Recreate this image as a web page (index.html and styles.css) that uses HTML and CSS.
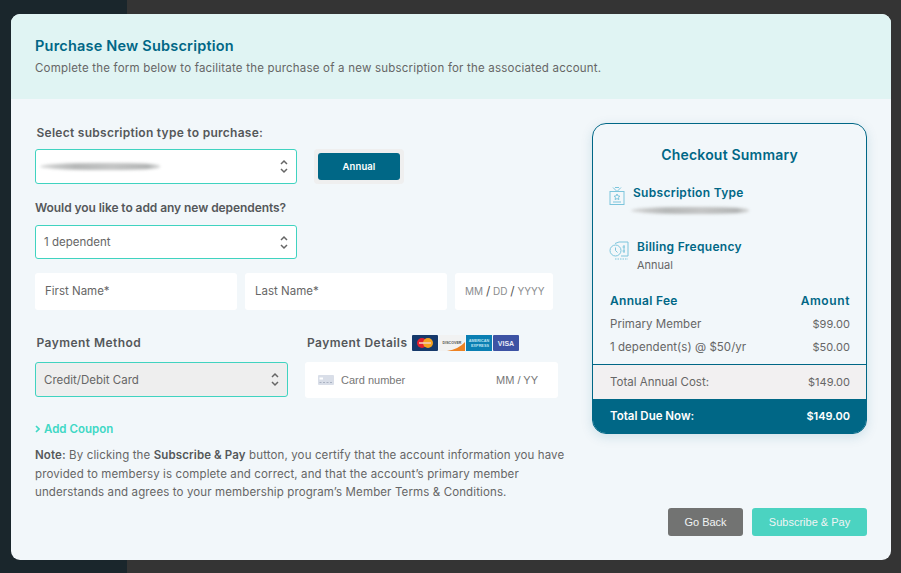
FILE: index.html
```html
<!DOCTYPE html>
<html lang="en">
<head>
  <meta charset="UTF-8">
  <meta name="viewport" content="width=device-width, initial-scale=1.0">
  <title>Purchase New Subscription</title>
  <link rel="stylesheet" href="styles.css">
</head>
<body>
  <div class="sidebar-strip"></div>
  <div class="modal">
    <div class="modal__header">
      <h1 class="modal__title">Purchase New Subscription</h1>
      <p class="modal__subtitle">Complete the form below to facilitate the purchase of a new subscription for the associated account.</p>
    </div>
    <div class="modal__body">
      <div class="form-col">
        <div class="field-label field-label--inset">Select subscription type to purchase:</div>
        <div class="type-row">
          <div class="select-box">
            <span class="smudge smudge--select"></span>
            <svg class="updown" width="10" height="15" viewBox="0 0 10 15"><path d="M2 5l3-3 3 3M2 10l3 3 3-3" fill="none" stroke="#666" stroke-width="1.5"/></svg>
          </div>
          <div class="frequency-tabs"><button class="frequency-tab">Annual</button></div>
        </div>
        <div class="field-label field-label--second">Would you like to add any new dependents?</div>
        <div class="select-box select-box--dep">
          <span>1 dependent</span>
          <svg class="updown" width="10" height="15" viewBox="0 0 10 15"><path d="M2 5l3-3 3 3M2 10l3 3 3-3" fill="none" stroke="#666" stroke-width="1.5"/></svg>
        </div>
        <div class="name-row">
          <div class="text-input text-input--name">First Name*</div>
          <div class="text-input text-input--name">Last Name*</div>
          <div class="text-input text-input--date">MM <b>/</b> DD <b>/</b> YYYY</div>
        </div>
        <div class="payment-row">
          <div class="payment-method">
            <div class="field-label field-label--inset field-label--pay">Payment Method</div>
            <div class="select-box select-box--grey">
              <span>Credit/Debit Card</span>
              <svg class="updown" width="10" height="15" viewBox="0 0 10 15"><path d="M2 5l3-3 3 3M2 10l3 3 3-3" fill="none" stroke="#666" stroke-width="1.5"/></svg>
            </div>
          </div>
          <div class="payment-details">
            <div class="details-head">
              <span class="field-label field-label--pay">Payment Details</span>
              <svg class="card-logo" width="26" height="16" viewBox="0 0 26 16"><rect width="26" height="16" rx="1" fill="#16396b"/><circle cx="10" cy="8" r="5" fill="#e3202e"/><circle cx="16" cy="8" r="5" fill="#f6a21e"/><rect x="7" y="7" width="12" height="2" fill="#f5c9b5" opacity=".8"/></svg>
              <svg class="card-logo" width="26" height="16" viewBox="0 0 26 16"><rect width="26" height="16" fill="#f1f2f2"/><path d="M26 7v9H8q12-2 18-9z" fill="#ee8323"/><text x="13" y="9" font-size="3.6" font-weight="700" text-anchor="middle" fill="#555" font-family="Liberation Sans">DISCOVER</text></svg>
              <svg class="card-logo" width="26" height="16" viewBox="0 0 26 16"><rect width="26" height="16" fill="#0a7fb3"/><text x="13" y="7" font-size="3.8" font-weight="700" text-anchor="middle" fill="#bfe3f2" font-family="Liberation Sans">AMERICAN</text><text x="14" y="11.5" font-size="3.8" font-weight="700" text-anchor="middle" fill="#bfe3f2" font-family="Liberation Sans">EXPRESS</text></svg>
              <svg class="card-logo" width="26" height="16" viewBox="0 0 26 16"><rect width="26" height="16" rx="1" fill="#3d53a4"/><text x="13" y="10.5" font-size="7" font-weight="700" text-anchor="middle" fill="#e8ebf6" font-family="Liberation Sans">VISA</text></svg>
            </div>
            <div class="card-input">
              <svg width="16" height="10" viewBox="0 0 16 10"><rect width="16" height="10" rx="1" fill="#d9dee8"/><rect x="1.5" y="2.5" width="3.5" height="2" fill="#fff"/><path d="M1.5 7.5h2M5 7.5h2M8.500 7.5h2M12 7.500h2" stroke="#aab2c2"/></svg>
              <span class="card-input__number">Card number</span>
              <span class="card-input__expiry">MM / YY</span>
            </div>
          </div>
        </div>
        <div class="coupon-link">
          <svg width="5" height="8" viewBox="0 0 5 8"><path d="M1 1l3 3-3 3" fill="none" stroke="#40d8c5" stroke-width="1.600"/></svg>
          <span>Add Coupon</span>
        </div>
        <p class="note"><b>Note:</b> By clicking the <b>Subscribe &amp; Pay</b> button, you certify that the account information you have provided to membersy is complete and correct, and that the account’s primary member understands and agrees to your membership program’s Member Terms &amp; Conditions.</p>
      </div>
      <div class="summary-col">
        <div class="summary-card">
          <div class="summary-card__title">Checkout Summary</div>
          <div class="summary-item">
            <svg class="summary-item__icon" width="16" height="18" viewBox="0 0 16 18" fill="none" stroke="#7cc5dc"><rect x="1" y="4.500" width="14" height="13"/><path d="M4 .5l4 4 4-4M6 .5h4"/><path d="M8 7l1 2 2 .2-1.500 1.400.4 2-1.900-1-1.900 1 .4-2L5 9.200l2-.2z"/><path d="M4 15h8"/></svg>
            <div class="summary-item__text">
              <div class="summary-item__label">Subscription Type</div>
              <span class="smudge smudge--summary"></span>
            </div>
          </div>
          <div class="summary-item summary-item--billing">
            <svg class="summary-item__icon" width="20" height="19" viewBox="0 0 20 19" fill="none" stroke="#7cc5dc"><circle cx="6.500" cy="9.500" r="5.500"/><path d="M6.500 6.500v3l2 2"/><path d="M6 2.500l4-1.500h9v14h-7"/><path d="M15 4v8M13.500 6h2.500M13.500 10h2.500"/><path d="M6 18h13" stroke-dasharray="1.500 1"/></svg>
            <div class="summary-item__text">
              <div class="summary-item__label">Billing Frequency</div>
              <div class="summary-item__value">Annual</div>
            </div>
          </div>
          <div class="fee-table">
            <div class="fee-row fee-row--head"><span>Annual Fee</span><span class="amount-head">Amount</span></div>
            <div class="fee-row"><span>Primary Member</span><span class="amount">$99.00</span></div>
            <div class="fee-row"><span>1 dependent(s) @ $50/yr</span><span class="amount">$50.00</span></div>
          </div>
          <div class="total-row"><span>Total Annual Cost:</span><span class="amount">$149.00</span></div>
          <div class="due-row"><span>Total Due Now:</span><span class="amount">$149.00</span></div>
        </div>
        <div class="actions">
          <button class="btn btn--back">Go Back</button>
          <button class="btn btn--pay">Subscribe &amp; Pay</button>
        </div>
      </div>
    </div>
  </div>
</body>
</html>
```

FILE: styles.css
```css
/* General styles */
* {
  box-sizing: border-box;
}

html,
body {
  height: 100%;
}

body {
  margin: 0;
  padding: 14px 10px 13px 11px;
  background: #343434;
  font-family: "Inter", "Noto Sans", sans-serif;
  color: #5f6163;
  overflow: hidden;
}

.sidebar-strip {
  position: absolute;
  left: 0;
  top: 0;
  bottom: 0;
  width: 127px;
  background: #1a262c;
}

.modal {
  position: relative;
  height: 546px;
  background: #f2f7fa;
  border-radius: 9px;
  display: flex;
  flex-direction: column;
  overflow: hidden;
}

.modal__header {
  height: 85px;
  padding: 23px 24px 0;
  background: #e0f4f3;
}

.modal__title {
  margin: 0;
  font-size: 14.500px;
  line-height: 18px;
  font-weight: 600;
  letter-spacing: .2px;
  color: #006786;
}

.modal__subtitle {
  margin: 6px 0 0;
  font-size: 11.500px;
  line-height: 15px;
  letter-spacing: .2px;
  color: #666;
}

.modal__body {
  flex: 1;
  display: flex;
  justify-content: space-between;
  padding: 24px;
}

/* Form column */
.form-col {
  width: 534px;
  padding-top: 2px;
}

.field-label {
  font-size: 12px;
  line-height: 16px;
  font-weight: 600;
  letter-spacing: .27px;
  color: #55585a;
}

.field-label--inset {
  padding-left: 1.5px;
}

.field-label--second {
  margin: 16px 0 9px;
  letter-spacing: -.07px;
}

.field-label--pay {
  letter-spacing: .45px;
}

.type-row {
  display: flex;
  margin-top: 8px;
}

.select-box {
  width: 262px;
  height: 35px;
  padding: 0 7px 0 8px;
  display: flex;
  align-items: center;
  justify-content: space-between;
  background: #fff;
  border: 1px solid #40d3c0;
  border-radius: 3px;
  font-size: 11.500px;
  color: #666;
}

.select-box--dep {
  height: 34px;
}

.select-box--grey {
  width: 253px;
  margin-top: 11px;
  background: #eee;
}

.updown {
  flex: none;
}

.smudge {
  display: block;
  height: 7px;
  background: linear-gradient(90deg, #d4d5d5, #b4b6b6 30%, #c4c5c5 60%, #b0b2b2 90%, #d8d9d9);
  border-radius: 50% 40% 40% 50%;
  filter: blur(1.500px);
}

.smudge--select {
  width: 120px;
  margin-left: -4px;
}

.smudge--summary {
  width: 118px;
  margin: 6px 0 0 -2px;
}

.frequency-tabs {
  margin-left: 17px;
  padding: 4px;
  background: #efefef;
  border-radius: 4px;
}

.frequency-tab {
  display: block;
  width: 82px;
  height: 27px;
  padding: 0;
  border: 0;
  border-radius: 3px;
  background: #006786;
  color: #fff;
  font-family: inherit;
  font-size: 9.500px;
  font-weight: 600;
  letter-spacing: .1px;
}

.name-row {
  display: flex;
  gap: 8px;
  margin-top: 14px;
}

.text-input {
  height: 37px;
  padding: 0 10px 2px;
  display: flex;
  align-items: center;
  background: #fff;
  border-radius: 3px;
  font-size: 11.500px;
  color: #666;
  white-space: pre;
}

.text-input--name {
  width: 202px;
}

.text-input--date {
  width: 98px;
  font-size: 10px;
  color: #8a8c8e;
}

.text-input--date b {
  font-weight: 400;
  color: #555;
  font-size: 12px;
}

.payment-row {
  display: flex;
  margin-top: 25px;
}

.payment-method {
  width: 270px;
}

.details-head {
  display: flex;
  align-items: center;
  height: 16px;
  margin-left: 2px;
  gap: 1px;
}

.details-head .field-label {
  margin-right: 4px;
}

.card-logo {
  flex: none;
}

.card-input {
  width: 253px;
  height: 36px;
  margin-top: 11px;
  padding: 0 20px 0 13px;
  display: flex;
  align-items: center;
  background: #fff;
  border-radius: 3px;
  font-family: "Liberation Sans", sans-serif;
  font-size: 11px;
  color: #777;
}

.card-input__number {
  margin-left: 7px;
}

.card-input__expiry {
  margin-left: auto;
}

.coupon-link {
  display: flex;
  align-items: center;
  gap: 4px;
  margin-top: 23px;
  font-size: 11.500px;
  line-height: 16px;
  font-weight: 600;
  color: #40d8c5;
}

.note {
  margin: 9px 0 0;
  font-size: 11.500px;
  line-height: 18.600px;
  letter-spacing: .12px;
  color: #666;
}

.note b {
  font-weight: 600;
  color: #55585a;
}

/* Summary column */
.summary-col {
  width: 275px;
  display: flex;
  flex-direction: column;
  justify-content: space-between;
}

.summary-card {
  height: 311px;
  border: 1px solid #006786;
  border-radius: 14px;
  box-shadow: 0 3px 12px rgba(0, 103, 134, .15);
  overflow: hidden;
  display: flex;
  flex-direction: column;
}

.summary-card__title {
  margin-top: 22px;
  text-align: center;
  font-size: 14px;
  line-height: 18px;
  font-weight: 600;
  letter-spacing: .2px;
  color: #006786;
}

.summary-item {
  display: flex;
  gap: 8px;
  margin: 21px 0 0 16px;
}

.summary-item--billing {
  margin-top: 25px;
}

.summary-item__icon {
  flex: none;
  margin-top: 2px;
}

.summary-item__label {
  font-size: 12px;
  line-height: 16px;
  font-weight: 600;
  letter-spacing: .3px;
  color: #006786;
}

.summary-item__value {
  margin-top: 3px;
  font-size: 11px;
  line-height: 15px;
  color: #666;
}

.fee-table {
  margin-top: 15px;
  padding: 0 16px 0 17px;
}

.fee-row {
  display: flex;
  justify-content: space-between;
  height: 23px;
  align-items: center;
  font-size: 11.500px;
  letter-spacing: .05px;
  color: #666;
}

.fee-row--head {
  height: 24px;
  font-size: 12px;
  font-weight: 600;
  letter-spacing: .3px;
  color: #006786;
}

.amount {
  font-size: 11px;
}

.amount-head {
  letter-spacing: .6px;
}

.total-row {
  margin-top: 6px;
  height: 35px;
  padding: 0 16px 0 17px;
  display: flex;
  justify-content: space-between;
  align-items: center;
  border-top: 1px solid #006786;
  background: #f2f0f1;
  font-size: 11.500px;
  color: #666;
}

.due-row {
  flex: 1;
  padding: 0 16px 0 17px;
  display: flex;
  justify-content: space-between;
  align-items: center;
  background: #006786;
  color: #fff;
  font-size: 11.500px;
  font-weight: 600;
}

.actions {
  display: flex;
  justify-content: flex-end;
  gap: 9px;
}

.btn {
  height: 28px;
  padding: 0;
  border: 0;
  border-radius: 3px;
  color: #f0f4f4;
  font-family: "Liberation Sans", sans-serif;
  font-size: 11px;
}

.btn--back {
  width: 75px;
  background: #727372;
}

.btn--pay {
  width: 115px;
  background: #4bd3c1;
}
```
